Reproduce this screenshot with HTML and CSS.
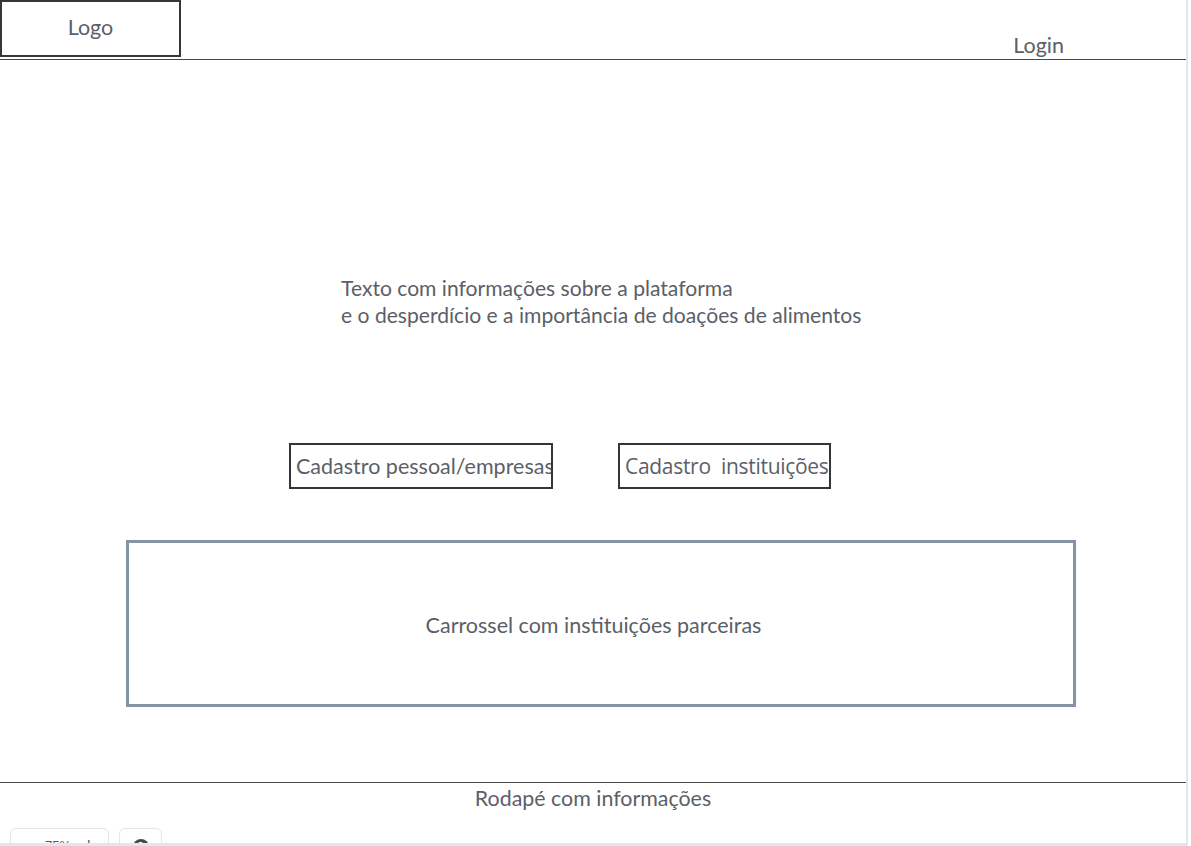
FILE: index.html
```html
<!DOCTYPE html>
<html lang="pt">
<head>
<meta charset="utf-8">
<title>Wireframe</title>
<link rel="stylesheet" href="styles.css">
</head>
<body>
<div class="page">
  <div class="frame">
    <header class="header">
      <div class="logo">Logo</div>
      <div class="login">Login</div>
    </header>
    <main class="main">
      <p class="intro">Texto com informações sobre a plataforma<br>e o desperdício e a importância de doações de alimentos</p>
      <div class="actions">
        <div class="btn btn-personal">Cadastro pessoal/empresas</div>
        <div class="btn btn-inst">Cadastro&nbsp; instituições</div>
      </div>
      <div class="carousel">Carrossel com instituições parceiras</div>
    </main>
    <footer class="footer">Rodapé com informações</footer>
  </div>
  <div class="toolbar">
    <div class="tool tool-zoom"><span class="minus">−</span><span class="pct">75%</span><span class="plus">+</span></div>
    <div class="tool tool-help"><span class="help">?</span></div>
  </div>
  <div class="bottom-edge"></div>
</div>
</body>
</html>
```

FILE: styles.css
```css
html, body {
  margin: 0;
  padding: 0;
  background: #ffffff;
}

body {
  font-family: Lato, "Open Sans", "Liberation Sans", sans-serif;
  color: #5b6068;
}

.page {
  position: relative;
  width: 1191px;
  height: 846px;
  overflow: hidden;
  background: #ffffff;
}

.frame {
  width: 1186px;
  height: 846px;
  border-right: 2px solid #e4e7ee;
  display: flex;
  flex-direction: column;
}

.header {
  height: 59px;
  border-bottom: 1px solid #46484c;
  display: flex;
  align-items: flex-start;
  flex-shrink: 0;
}

.logo {
  width: 181px;
  height: 57px;
  box-sizing: border-box;
  border: 2px solid #35373a;
  display: flex;
  justify-content: center;
  padding-top: 13px;
  font-size: 21.5px;
  line-height: 24px;
}

.login {
  margin-left: auto;
  margin-right: 122px;
  margin-top: 33px;
  font-size: 21.5px;
  line-height: 24px;
}

.main {
  flex: 1;
  display: flex;
  flex-direction: column;
}

.intro {
  margin: 214px 0 0 341px;
  font-size: 21.1px;
  line-height: 27px;
}

.actions {
  display: flex;
  gap: 65px;
  margin: 115px 0 0 289px;
}

.btn {
  height: 46px;
  box-sizing: border-box;
  border: 2px solid #333539;
  display: flex;
  align-items: center;
  padding-left: 5px;
  font-size: 21.5px;
  white-space: nowrap;
  overflow: hidden;
}

.btn-personal {
  width: 264px;
}

.btn-inst {
  width: 213px;
  font-family: "Open Sans", "Noto Sans", sans-serif;
  font-size: 21px;
  letter-spacing: -0.3px;
}

.carousel {
  margin: 51px 0 0 126px;
  width: 950px;
  height: 167px;
  box-sizing: border-box;
  border: 3px solid #8692a6;
  display: flex;
  align-items: center;
  justify-content: center;
  font-size: 21.5px;
  padding-top: 3px;
  padding-right: 15px;
}

.footer {
  height: 63px;
  margin-top: 74px;
  border-top: 1px solid #4a4c50;
  text-align: center;
  font-size: 21.4px;
  line-height: 31px;
  flex-shrink: 0;
}

.toolbar {
  position: absolute;
  left: 10px;
  top: 828px;
  display: flex;
  gap: 10px;
}

.tool {
  height: 36px;
  box-sizing: border-box;
  border: 1px solid #e2e5ea;
  border-radius: 6px;
  background: #ffffff;
  display: flex;
  align-items: flex-start;
  padding-top: 9px;
  font-family: "Liberation Sans", sans-serif;
  font-size: 13px;
  color: #555a62;
}

.tool-zoom {
  width: 99px;
  justify-content: space-between;
  padding-left: 14px;
  padding-right: 14px;
}

.minus {
  visibility: hidden;
}

.plus {
  font-size: 18px;
  margin-top: -3px;
}

.tool-help {
  width: 43px;
  justify-content: center;
}

.help {
  width: 16px;
  height: 16px;
  border-radius: 50%;
  background: #45484e;
  color: #ffffff;
  font-weight: bold;
  font-size: 12px;
  line-height: 16px;
  text-align: center;
  margin-top: 1px;
}

.bottom-edge {
  position: absolute;
  left: 0;
  bottom: 0;
  width: 1188px;
  height: 3px;
  background: #e3e6ec;
}
```
